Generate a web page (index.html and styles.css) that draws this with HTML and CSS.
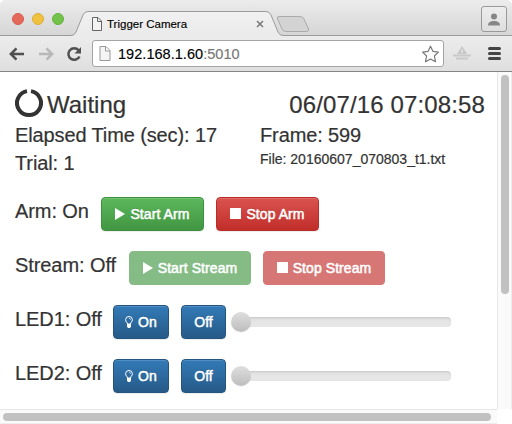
FILE: index.html
```html
<!DOCTYPE html>
<html lang="en">
<head>
<meta charset="utf-8">
<title>Trigger Camera</title>
<link rel="stylesheet" href="styles.css">
</head>
<body>
<div class="window">
  <header class="tabstrip">
    <svg class="tab-shape" width="512" height="36" viewBox="0 0 512 36">
      <defs>
        <linearGradient id="tab" x1="0" y1="0" x2="0" y2="1"><stop offset="0" stop-color="#f1f1f1"/><stop offset="1" stop-color="#eaeaea"/></linearGradient>
      </defs>
      <path d="M0 35.500H71Q74.500 35.500 76 32L83 15Q84.500 11.500 88 11.500H266Q269.500 11.500 271 15L278 32Q279.500 35.500 283 35.500H512V37H0Z" fill="url(#tab)"/>
      <path d="M0 35.500H71Q74.500 35.500 76 32L83 15Q84.500 11.500 88 11.500H266Q269.500 11.500 271 15L278 32Q279.500 35.500 283 35.500H512" fill="none" stroke="#9b9b9b"/>
      <path d="M279 16.500H300Q303 16.500 304 19L308.500 29Q309.500 31.500 306.500 31.500H286Q283 31.500 282 29L277.500 19Q276.500 16.500 279 16.500Z" fill="#d3d3d3" stroke="#aaa"/>
    </svg>
    <div class="lights"><i class="red"></i><i class="yellow"></i><i class="green"></i></div>
    <svg class="tab-page" width="10" height="14" viewBox="0 0 10 14"><path d="M.5.5H6L9.500 4V13.500H.5ZM5.500.5V4.500H9.500" fill="#f3f3f3" stroke="#666"/></svg>
    <span class="tab-title">Trigger Camera</span>
    <svg class="tab-close" width="8" height="8" viewBox="0 0 8 8"><path d="M1 1L7 7M7 1L1 7" stroke="#777" stroke-width="1.500"/></svg>
    <div class="profile"><svg width="12" height="13" viewBox="0 0 12 13"><circle cx="6" cy="3.500" r="3" fill="#868686"/><path d="M0 12.500C0 9 3 8 6 8S12 9 12 12.500Z" fill="#868686"/></svg></div>
  </header>
  <nav class="toolbar">
    <svg class="back" width="16" height="14" viewBox="0 0 16 14"><path d="M15 7H2M7.500 1.300L1.800 7L7.500 12.700" fill="none" stroke="#505050" stroke-width="2.500"/></svg>
    <svg class="forward" width="16" height="14" viewBox="0 0 16 14"><path d="M1 7H14M8.500 1.300L14.200 7L8.500 12.700" fill="none" stroke="#b8b8b8" stroke-width="2.500"/></svg>
    <svg class="reload" width="16" height="16" viewBox="0 0 16 16"><path d="M12.600 4.200A5.800 5.800 0 1 0 13.500 10.400" fill="none" stroke="#505050" stroke-width="2.500"/><path d="M15 1V7.500H8.500Z" fill="#505050"/></svg>
    <div class="address">
      <svg class="page" width="12" height="15" viewBox="0 0 12 15"><path d="M1 .5H7L11 4.500V14.500H1ZM6.500.5V5H11" fill="#f4f4f4" stroke="#999"/></svg>
      <span class="url">192.168.1.60<span class="port">:5010</span></span>
      <svg class="star" width="19" height="18" viewBox="0 0 19 18"><path d="M9.500 1.200L11.900 6.300L17.400 7.100L13.400 11L14.500 16.700L9.500 13.900L4.500 16.700L5.600 11L1.600 7.100L7.100 6.300Z" fill="#fff" stroke="#777" stroke-width="1.200" stroke-linejoin="round"/></svg>
    </div>
    <svg class="extension" width="18" height="15" viewBox="0 0 18 15"><path d="M9 0L14 8H4Z" fill="#c6c6c6"/><path d="M9 3V7" stroke="#f3f3f3"/><path d="M0 9.500H18M3 12.500H15" stroke="#c9c9c9" stroke-width="2"/></svg>
    <svg class="menu" width="13" height="13" viewBox="0 0 13 13"><path d="M1.500 1.500H11.500M1.500 6.500H11.500M1.500 11.500H11.500" stroke="#444" stroke-width="3" stroke-linecap="round"/></svg>
  </nav>
  <div class="viewport">
    <main>
      <div class="headline">
        <svg width="28" height="28" viewBox="0 0 28 28"><path d="M16 2.150A12 12 0 1 1 12 2.150" fill="none" stroke="#333" stroke-width="4"/></svg>
        <span class="state">Waiting</span>
        <span class="clock">06/07/16 07:08:58</span>
      </div>
      <div class="info">
        <span class="elapsed">Elapsed Time (sec): 17</span><span class="frame">Frame: 599</span>
        <span class="trial">Trial: 1</span><span class="file">File: 20160607_070803_t1.txt</span>
      </div>
      <div class="row arm">
        <span class="label">Arm: On</span>
        <button class="btn success"><svg width="10" height="12"><path d="M0 0L10 6L0 12Z" fill="#fff"/></svg><span>Start Arm</span></button>
        <button class="btn danger"><svg width="11" height="11"><path d="M0 0H11V11H0Z" fill="#fff"/></svg><span>Stop Arm</span></button>
      </div>
      <div class="row stream">
        <span class="label">Stream: Off</span>
        <button class="btn success off"><svg width="10" height="12"><path d="M0 0L10 6L0 12Z" fill="#fff"/></svg><span>Start Stream</span></button>
        <button class="btn danger off"><svg width="11" height="11"><path d="M0 0H11V11H0Z" fill="#fff"/></svg><span>Stop Stream</span></button>
      </div>
      <div class="row led">
        <span class="label">LED1: Off</span>
        <button class="btn primary"><svg width="8" height="12" viewBox="0 0 8 12"><path d="M2.500 8C2.500 6.300.6 6 .6 3.700A3.400 3.200 0 0 1 7.400 3.700C7.400 6 5.500 6.300 5.500 8Z" fill="none" stroke="#fff"/><path d="M2 8H6V10.500L5 12H3L2 10.500Z" fill="#fff"/><path d="M4 2.300Q5.400 2.300 5.600 3.700" fill="none" stroke="#fff" stroke-width=".7"/></svg><span>On</span></button>
        <button class="btn primary plain"><span>Off</span></button>
        <div class="slider"><i></i></div>
      </div>
      <div class="row led">
        <span class="label">LED2: Off</span>
        <button class="btn primary"><svg width="8" height="12" viewBox="0 0 8 12"><path d="M2.500 8C2.500 6.300.6 6 .6 3.700A3.400 3.200 0 0 1 7.400 3.700C7.400 6 5.500 6.300 5.500 8Z" fill="none" stroke="#fff"/><path d="M2 8H6V10.500L5 12H3L2 10.500Z" fill="#fff"/><path d="M4 2.300Q5.400 2.300 5.600 3.700" fill="none" stroke="#fff" stroke-width=".7"/></svg><span>On</span></button>
        <button class="btn primary plain"><span>Off</span></button>
        <div class="slider"><i></i></div>
      </div>
    </main>
    <div class="vscroll"><i></i></div>
    <div class="hscroll"><i></i></div>
  </div>
</div>
</body>
</html>
```
FILE: styles.css
```css
* { box-sizing: border-box; }
body { margin: 0; background: #fff; color: #333; font-family: "Liberation Sans", Arial, sans-serif; overflow: hidden; }
svg { display: block; flex: none; }
.window { width: 512px; height: 424px; border-radius: 5px 5px 0 0; overflow: hidden; }
.tabstrip { position: relative; height: 36px; display: flex; align-items: flex-start; background: linear-gradient(#ececec, #d5d5d5); }
.tab-shape { position: absolute; left: 0; top: 0; }
.tabstrip > :not(.tab-shape) { position: relative; }
.lights { display: flex; gap: 8px; margin: 13px 0 0 12px; }
.lights i { width: 12px; height: 12px; border-radius: 50%; border: 1px solid; }
.red { background: #e5695b; border-color: #d35c50 !important; }
.yellow { background: #f0c03f; border-color: #dcae38 !important; }
.green { background: #73c34a; border-color: #62b23e !important; }
.tab-page { margin: 17px 0 0 28px; }
.tab-title { margin: 17px 0 0 5px; width: 149px; font-size: 11.500px; line-height: 14px; color: #000; white-space: nowrap; -webkit-text-stroke: .15px; }
.tab-close { margin: 20px 0 0; }
.profile { width: 26px; height: 26px; margin: 6px 5px 0 auto; display: flex; align-items: center; justify-content: center; border: 1px solid #999; border-radius: 3px; background: linear-gradient(#ededed, #dedede); }
.toolbar { height: 36px; display: flex; align-items: center; background: linear-gradient(#ececec, #dfdfdf); border-bottom: 1px solid #858585; }
.back { margin-left: 9px; }
.forward { margin-left: 13px; }
.reload { margin-left: 12px; }
.address { width: 352px; height: 27px; margin-left: 10px; padding: 0 3px 0 6px; display: flex; align-items: center; border: 1px solid #a4a4a4; border-radius: 3px; background: #fff; }
.url { margin-left: 7px; font-size: 14.500px; line-height: 18px; color: #000; flex: 1; letter-spacing: .04px; -webkit-text-stroke: .15px; }
.port { color: #777; }
.extension { margin-left: 9px; }
.menu { margin-left: 17px; }
.viewport { display: grid; grid-template: 337px 15px / 497px 15px; }
main { padding: 17px 12px 0 15px; overflow: hidden; -webkit-text-stroke: .2px; }
.headline { height: 32px; display: flex; align-items: flex-start; font-size: 24px; line-height: 32px; white-space: nowrap; }
.state { margin-left: 4px; }
.clock { margin-left: auto; letter-spacing: .13px; }
.info { display: grid; grid-template: 28px 28px / 245px 1fr; font-size: 20px; line-height: 28px; white-space: nowrap; letter-spacing: -.12px; }
.file { font-size: 14px; line-height: 20px; letter-spacing: 0; }
.row { height: 34px; margin-top: 20px; display: flex; align-items: flex-start; }
.label { font-size: 20px; line-height: 28px; white-space: nowrap; letter-spacing: -.08px; }
.arm .label { width: 86px; }
.stream .label { width: 114px; }
.led .label { width: 98px; }
.btn { width: 103px; height: 34px; margin: 0 12px 0 0; padding: 0 0 1px; display: flex; align-items: center; justify-content: center; gap: 5px; border: 1px solid; border-radius: 4px; font: 14px/20px "Liberation Sans", Arial, sans-serif; letter-spacing: .08px; color: #fff; white-space: nowrap; text-shadow: 0 -1px 0 rgba(0,0,0,.2); -webkit-text-stroke: .5px #fff; box-shadow: inset 0 1px 0 rgba(255,255,255,.15), 0 1px 1px rgba(0,0,0,.075); }
.arm .btn { width: 103px; }
.stream .btn { width: 122px; }
.success { background: linear-gradient(#5cb85c, #419641); border-color: #3e8f3e; }
.danger { background: linear-gradient(#d9534f, #c12e2a); border-color: #b92c28; }
.primary { width: 56px; background: linear-gradient(#337ab7, #265a88); border-color: #245580; }
.primary.plain { width: 45px; }
.success.off { background: #85bb85; border-color: #85bb85; box-shadow: none; text-shadow: none; }
.danger.off { background: #d67775; border-color: #d67775; box-shadow: none; text-shadow: none; }
.slider { width: 210px; height: 10px; margin: 12px 0 0 3px; display: flex; align-items: center; border-radius: 4px; background: linear-gradient(#dedede, #e6e6e6 50%); box-shadow: inset 0 1px 2px rgba(0,0,0,.1); }
.slider i { width: 20px; height: 20px; margin-left: -10px; border-radius: 50%; background: linear-gradient(#dedede, #bdbdbd); box-shadow: 0 1px 2px rgba(0,0,0,.05); flex: none; }
.vscroll { padding: 3px 0 0 3px; background: #fafafa; border-left: 1px solid #e7e7e7; border-right: 1px solid #ededed; }
.vscroll i { display: block; width: 8px; height: 219px; border-radius: 4px; background: #c1c1c1; }
.hscroll { height: 15px; padding: 3px; background: #fafafa; border-top: 1px solid #e7e7e7; border-bottom: 1px solid #ededed; }
.hscroll i { display: block; width: 488px; height: 8px; border-radius: 4px; background: #c1c1c1; }
```
